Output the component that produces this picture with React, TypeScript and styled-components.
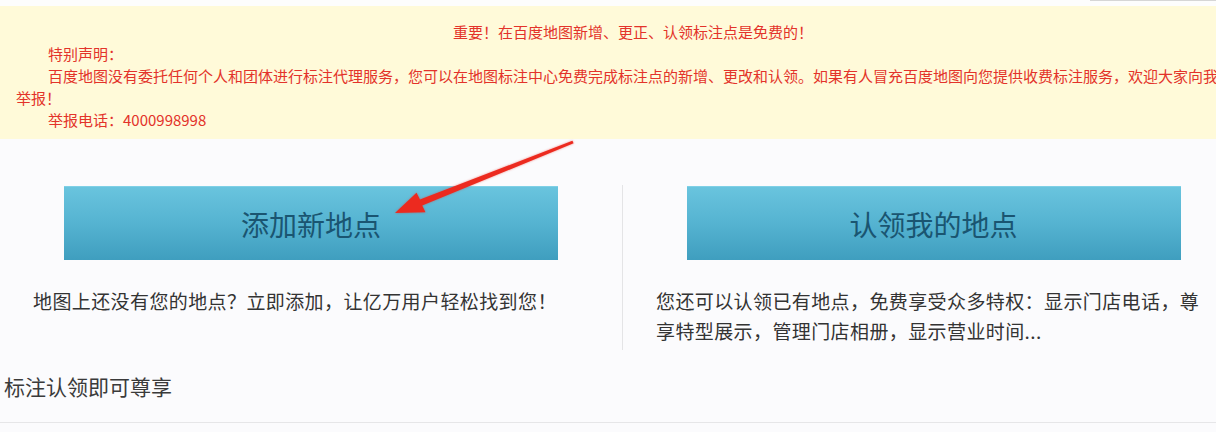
import React from "react";
import styled, { createGlobalStyle } from "styled-components";

const GlobalStyle = createGlobalStyle`
  html, body {
    margin: 0;
    padding: 0;
    overflow: hidden;
    background: #fbfbfd;
  }
  body {
    font-family: "Noto Sans CJK SC", "Noto Sans", sans-serif;
  }
`;

const StyledPage = styled.div`
  position: relative;
  width: 1244px;
  display: flex;
  flex-direction: column;
`;

const StyledTopStrip = styled.div`
  height: 6px;
  background: #fdfdfd;
  display: flex;
  justify-content: flex-end;
  padding-right: 28px;
`;

const StyledSearchEdge = styled.div`
  width: 126px;
  height: 1px;
  background: #d6d6d6;
`;

const StyledNotice = styled.div`
  background: #fffad9;
  padding: 15px 4px 8px 16px;
  color: #e3332a;
  font-size: 15px;
  line-height: 22px;
`;

const StyledNoticeLine = styled.p<{ $center?: boolean }>`
  margin: 0;
  text-align: ${(p) => (p.$center ? "center" : "left")};
  text-indent: ${(p) => (p.$center ? "0" : "32px")};
  padding-left: ${(p) => (p.$center ? "10px" : "0")};
`;

const StyledColumns = styled.div`
  margin-top: 46px;
  display: grid;
  grid-template-columns: 622px 1fr;
`;

const StyledColumn = styled.div<{ $divider?: boolean }>`
  display: flex;
  flex-direction: column;
  padding: 1px 0 4px;
  border-left: ${(p) => (p.$divider ? "1px solid #e4e4e6" : "none")};
`;

const StyledBigButton = styled.button`
  align-self: center;
  width: 494px;
  height: 74px;
  border: none;
  border-top: 1px solid #7fd0e6;
  background: linear-gradient(to bottom, #69c4de 0%, #55b3d1 50%, #3f9ebf 100%);
  color: #1a5571;
  font-family: "Noto Sans CJK SC", "Noto Sans", sans-serif;
  font-size: 28px;
  font-weight: 400;
  cursor: pointer;
  padding: 0;
`;

const StyledDesc = styled.div`
  margin-top: 26px;
  padding: 0 40px 0 33px;
  font-size: 19px;
  letter-spacing: 0.4px;
  line-height: 30px;
  color: #333;
`;

const StyledPerksTitle = styled.div`
  margin-top: 21px;
  padding: 0 0 21px 4px;
  font-size: 21px;
  line-height: 30px;
  color: #3a3a3a;
  border-bottom: 1px solid #e6e6e8;
`;

const StyledArrow = styled.svg`
  position: absolute;
  left: 0;
  top: 0;
  pointer-events: none;
  filter: drop-shadow(0 0 1px rgba(230, 40, 30, 0.5));
`;

const Arrow: React.FC = () => (
  <StyledArrow width={600} height={230} viewBox="0 0 600 230">
    <polygon
      points="395,213 416.5,192.8 420,199.6 572.4,140.8 573.6,143.2 422.2,205.6 425.5,212.2"
      fill="#ec2a1f"
    />
  </StyledArrow>
);

const App: React.FC = () => {
  return (
    <>
      <GlobalStyle />
      <StyledPage>
        <StyledTopStrip>
          <StyledSearchEdge />
        </StyledTopStrip>
        <StyledNotice>
          <StyledNoticeLine $center>
            重要！在百度地图新增、更正、认领标注点是免费的！
          </StyledNoticeLine>
          <StyledNoticeLine>特别声明：</StyledNoticeLine>
          <StyledNoticeLine>
            百度地图没有委托任何个人和团体进行标注代理服务，您可以在地图标注中心免费完成标注点的新增、更改和认领。如果有人冒充百度地图向您提供收费标注服务，欢迎大家向我们举报！
          </StyledNoticeLine>
          <StyledNoticeLine>举报电话：4000998998</StyledNoticeLine>
        </StyledNotice>

        <StyledColumns>
          <StyledColumn>
            <StyledBigButton children="添加新地点" />
            <StyledDesc children="地图上还没有您的地点？立即添加，让亿万用户轻松找到您！" />
          </StyledColumn>
          <StyledColumn $divider>
            <StyledBigButton children="认领我的地点" />
            <StyledDesc children="您还可以认领已有地点，免费享受众多特权：显示门店电话，尊享特型展示，管理门店相册，显示营业时间..." />
          </StyledColumn>
        </StyledColumns>

        <StyledPerksTitle children="标注认领即可尊享" />
        <Arrow />
      </StyledPage>
    </>
  );
};

export default App;
